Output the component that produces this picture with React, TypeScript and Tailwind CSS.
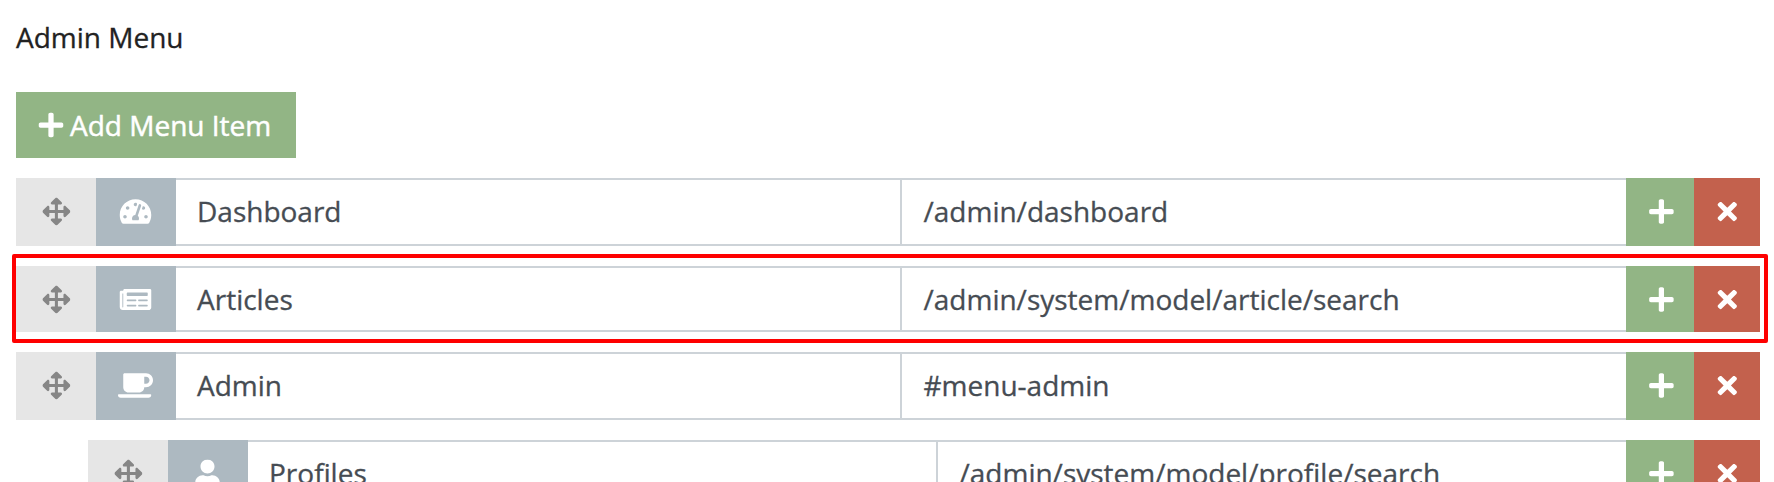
import React from "react";
import type { IconType } from "react-icons";
import { FaArrowsAlt, FaCoffee, FaNewspaper, FaPlus, FaTachometerAlt, FaTimes, FaUser } from "react-icons/fa";

type RowProps = {
  icon: IconType;
  label: string;
  path: string;
  height: string;
  nested?: boolean;
  highlighted?: boolean;
};

function MenuRow({ icon: Icon, label, path, height, nested, highlighted }: RowProps) {
  return (
    <div className={`relative flex shrink-0 ${height} ${nested ? "ml-[72px]" : ""}`}>
      <div className="flex w-20 justify-center bg-[#e6e6e6] pt-5 text-[#868686]">
        <FaArrowsAlt className="size-7 translate-x-[0.4px] -translate-y-[0.5px]" />
      </div>
      <div className="flex w-20 justify-center bg-[#adb9c1] pt-5 text-white">
        <Icon className="h-7 w-9 -translate-x-[0.5px] -translate-y-[0.5px]" />
      </div>
      <div className="min-w-0 flex-1 border-y-2 border-[#cdd3d8] pt-[11px] pl-[21px]">{label}</div>
      <div className="min-w-0 flex-1 border-y-2 border-l-2 border-[#cdd3d8] pt-[11px] pl-[22px]">{path}</div>
      <div className="flex w-[68px] justify-center bg-[#92b585] pt-5 text-white">
        <FaPlus className="size-7 translate-x-[1.4px] -translate-y-[0.5px]" />
      </div>
      <div className="flex w-[66px] justify-center bg-[#c3614d] pt-5 text-white">
        <FaTimes className="size-7 translate-x-[0.3px] -translate-y-[0.5px]" />
      </div>
      {highlighted && (
        <div className="pointer-events-none absolute -top-3 -left-1 h-[89px] w-[1756px] rounded-[2px] border-4 border-[#fe0000]" />
      )}
    </div>
  );
}

export default function App() {
  return (
    <div className="h-[482px] overflow-hidden bg-white pr-[14px] pl-4 font-['Open_Sans','Noto_Sans',sans-serif] text-[28px] leading-[40px] text-[#464c53] [-webkit-text-stroke:0.3px_currentColor]">
      <h1 className="h-[92px] pt-[17px] text-[#222]">Admin Menu</h1>
      <button className="flex h-[66px] w-[280px] items-center gap-[5px] bg-[#92b585] pl-[21px] text-white [-webkit-text-stroke:0.5px_currentColor]">
        <FaPlus className="size-7 shrink-0" />
        <span>Add Menu Item</span>
      </button>
      <div className="mt-5 flex flex-col gap-5">
        <MenuRow icon={FaTachometerAlt} label="Dashboard" path="/admin/dashboard" height="h-[68px]" />
        <MenuRow icon={FaNewspaper} label="Articles" path="/admin/system/model/article/search" height="h-[66px]" highlighted />
        <MenuRow icon={FaCoffee} label="Admin" path="#menu-admin" height="h-[68px]" />
        <MenuRow icon={FaUser} label="Profiles" path="/admin/system/model/profile/search" height="h-[68px]" nested />
      </div>
    </div>
  );
}
